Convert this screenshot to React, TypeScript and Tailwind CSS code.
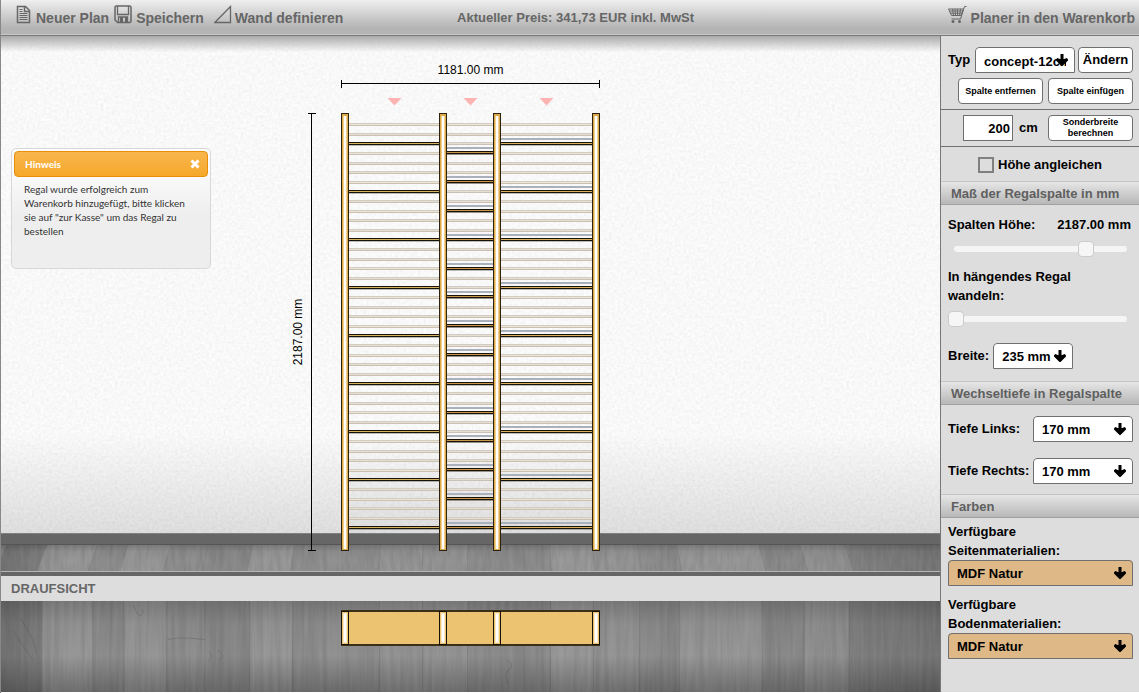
import { useState, type ReactNode } from "react";
import clsx from "clsx";

interface SelectFieldProps {
  id: string;
  options: string[];
  className?: string;
}

interface SectionTitleProps {
  children: ReactNode;
}

const FONT = "font-['Liberation_Sans',Arial,sans-serif]";

// Slot and board positions of the shelf, in drawing units
const SLOTS = Array.from({ length: 43 }, (_, i) => Math.round(124.1 + i * 9.6));
const WIDE_BOARDS = Array.from({ length: 9 }, (_, i) => 143 + i * 48);
const NARROW_BOARDS = Array.from({ length: 14 }, (_, i) => Math.round(152.4 + i * 28.8));
const POSTS = [341, 439, 493, 592];
const COLUMNS = [
  { x: 349, width: 90, boards: WIDE_BOARDS, rail: false },
  { x: 447, width: 46, boards: NARROW_BOARDS, rail: true },
  { x: 501, width: 91, boards: WIDE_BOARDS, rail: true },
];

const PLANKS = [
  { x: 0, width: 41, fill: "#000", opacity: 0.1 },
  { x: 41, width: 51, fill: "#fff", opacity: 0.03 },
  { x: 92, width: 31, fill: "#000", opacity: 0.03 },
  { x: 123, width: 43, fill: "#fff", opacity: 0.05 },
  { x: 166, width: 38, fill: "#000", opacity: 0.03 },
  { x: 204, width: 45, fill: "#000", opacity: 0.05 },
  { x: 249, width: 43, fill: "#fff", opacity: 0.04 },
  { x: 292, width: 87, fill: "#000", opacity: 0.02 },
  { x: 379, width: 43, fill: "#fff", opacity: 0.03 },
  { x: 422, width: 45, fill: "#fff", opacity: 0.01 },
  { x: 467, width: 83, fill: "#000", opacity: 0.04 },
  { x: 550, width: 43, fill: "#fff", opacity: 0.06 },
  { x: 593, width: 46, fill: "#fff", opacity: 0.02 },
  { x: 639, width: 40, fill: "#000", opacity: 0.04 },
  { x: 679, width: 83, fill: "#fff", opacity: 0.04 },
  { x: 762, width: 42, fill: "#000", opacity: 0.05 },
  { x: 804, width: 45, fill: "#fff", opacity: 0.03 },
  { x: 849, width: 91, fill: "#000", opacity: 0.05 },
];

function SectionTitle({ children }: SectionTitleProps) {
  return (
    <h2 className="h-6 pl-[10px] text-[13px] leading-6 font-bold text-[#5f5f5f] whitespace-nowrap border-y border-t-[#c4c4c4] border-b-[#a2a2a2] bg-linear-to-b from-[#e6e6e6] to-[#b8b8b8]">
      {children}
    </h2>
  );
}

function ArrowDown() {
  return (
    <svg
      viewBox="0 0 12 12"
      className="absolute right-[7px] top-[7px] size-3 pointer-events-none"
      aria-hidden="true"
    >
      <path d="M4.5 0h3v5.2L10.8 4 12 5.4v1L6.5 12h-1L0 6.4v-1L1.2 4l3.3 1.2z" fill="#000" />
    </svg>
  );
}

function SelectField({ id, options, className }: SelectFieldProps) {
  return (
    <span className={clsx("relative block h-[26px] rounded-t-[4px]", className)}>
      <select
        id={id}
        className="block size-full appearance-none rounded-t-[4px] border border-[#707070] bg-inherit pl-2 pr-2 pt-[3px] text-[13px] font-bold text-black"
      >
        {options.map((option) => (
          <option key={option}>{option}</option>
        ))}
      </select>
      <ArrowDown />
    </span>
  );
}

function Slider({ label, initial, max }: { label: string; initial: number; max: number }) {
  const [value, setValue] = useState(initial);

  return (
    <input
      type="range"
      aria-label={label}
      min={0}
      max={max}
      value={value}
      onChange={(e) => setValue(Number(e.target.value))}
      className="block h-4 w-full appearance-none bg-transparent [&::-webkit-slider-runnable-track]:h-[6px] [&::-webkit-slider-runnable-track]:rounded-full [&::-webkit-slider-runnable-track]:bg-[#f5f5f5] [&::-webkit-slider-thumb]:appearance-none [&::-webkit-slider-thumb]:size-4 [&::-webkit-slider-thumb]:-mt-[5px] [&::-webkit-slider-thumb]:rounded-[4px] [&::-webkit-slider-thumb]:border [&::-webkit-slider-thumb]:border-[#cccccc] [&::-webkit-slider-thumb]:bg-[#f6f6f6]"
    />
  );
}

function WallTexture() {
  return (
    <svg className="absolute inset-0 size-full opacity-5" aria-hidden="true">
      <filter id="plaster" x="0" y="0" width="100%" height="100%">
        <feTurbulence type="fractalNoise" baseFrequency="0.35" numOctaves="3" seed="4" />
        <feColorMatrix values="0 0 0 0 0  0 0 0 0 0  0 0 0 0 0  1 1 0 0 -0.7" />
      </filter>
      <rect width="100%" height="100%" filter="url(#plaster)" />
    </svg>
  );
}

function WoodFloor({ id, slanted = false }: { id: string; slanted?: boolean }) {
  const slope = slanted ? 0.012 : 0;

  return (
    <svg
      viewBox="0 0 940 92"
      preserveAspectRatio="none"
      className="absolute inset-0 size-full"
      aria-hidden="true"
    >
      <defs>
        <linearGradient id={`${id}-shade`} x1="0" y1="0" x2="0" y2="1">
          <stop offset="0" stopColor="#000" stopOpacity="0.18" />
          <stop offset="0.25" stopColor="#000" stopOpacity="0.04" />
          <stop offset="0.6" stopColor="#000" stopOpacity="0" />
          <stop offset="1" stopColor="#000" stopOpacity={slanted ? 0 : 0.25} />
        </linearGradient>
        <linearGradient id={`${id}-sides`}>
          <stop offset="0" stopColor="#000" stopOpacity="0.12" />
          <stop offset="0.06" stopColor="#000" stopOpacity="0" />
          <stop offset="0.85" stopColor="#000" stopOpacity="0" />
          <stop offset="1" stopColor="#000" stopOpacity="0.15" />
        </linearGradient>
        <filter id={`${id}-grain`} x="0" y="0" width="100%" height="100%">
          <feTurbulence type="fractalNoise" baseFrequency="0.22 0.012" numOctaves="3" seed="9" />
          <feColorMatrix values="0 0 0 0 0  0 0 0 0 0  0 0 0 0 0  1 0 0 0 -0.3" />
        </filter>
      </defs>
      <rect width="940" height="92" fill="#949494" />
      {PLANKS.map((p) => {
        const start = (470 - p.x) * slope;
        const end = (470 - p.x - p.width) * slope;
        return (
          <g key={p.x}>
            <path
              d={`M${p.x + start} 0H${p.x + p.width + end}L${p.x + p.width - end} 92H${p.x - start}z`}
              fill={p.fill}
              opacity={p.opacity}
            />
            <path d={`M${p.x + start} 0L${p.x - start} 92`} stroke="#7c7c7c" opacity="0.6" />
          </g>
        );
      })}
      <rect width="940" height="92" filter={`url(#${id}-grain)`} opacity="0.16" />
      {!slanted && (
        <g fill="none" stroke="#666" opacity="0.5">
          <path d="M167 39c12-3 26-1 37 0M217 50c5 2 6 8 1 10M208 51c4 3 3 7 0 9M20 18l12 21 4 15M12 30l20 30" />
          <path d="M507 60c5 2 5 8 1 10s-3 8 0 14M133 4c2 10 9 16 9 4" />
        </g>
      )}
      <rect width="940" height="92" fill={`url(#${id}-shade)`} />
      <rect width="940" height="92" fill={`url(#${id}-sides)`} />
    </svg>
  );
}

function ShelfFront() {
  return (
    <svg
      width="360"
      height="492"
      viewBox="291 60 360 492"
      className="relative block"
      role="img"
      aria-label="Vorderansicht"
    >
      <text x="470.5" y="74" textAnchor="middle" fontSize="12">
        1181.00 mm
      </text>
      <text transform="translate(302 332) rotate(-90)" textAnchor="middle" fontSize="12">
        2187.00 mm
      </text>
      <path
        d="M341.5 80v8M341 83.5h259M599.5 80v8M308 113.5h8M311.5 113v438M308 550.5h8"
        stroke="#000"
        fill="none"
        shapeRendering="crispEdges"
      />
      <path d="M387.500 98h14l-7 7.500zM463.500 98h14l-7 7.500zM539.500 98h14l-7 7.500z" fill="#ffb3b3" />

      <g shapeRendering="crispEdges">
        {SLOTS.map((y, i) => (
          <g key={y}>
            <rect x="349" y={y - 1} width="243" height="3" fill={i % 3 ? "#e8decd" : "#f1e6cd"} />
            <rect x="349" y={y - 1} width="243" height="1" fill="#d0cdc8" />
            <rect x="349" y={y + 1} width="243" height="1" fill="#c8c1b5" />
          </g>
        ))}

        {COLUMNS.map((column) =>
          column.boards.map((y) => (
            <g key={`${column.x}-${y}`}>
              {column.rail && <rect x={column.x} y={y - 5} width={column.width} height="2" fill="#abb0bd" />}
              <rect x={column.x} y={y - 1} width={column.width} height="3" fill="#17120a" />
              <rect
                x={column.x}
                y={y}
                width={column.width}
                height="1"
                fill={column.width < 50 ? "#c8974a" : "#d9b15c"}
              />
              <rect x={column.x} y={y + 2} width={column.width} height="1" fill="#000" opacity="0.25" />
            </g>
          )),
        )}

        {POSTS.map((x) => (
          <g key={x}>
            <rect x={x} y="113" width="8" height="438" fill="#2b2210" />
            <rect x={x + 1} y="114" width="6" height="436" fill="#dca94c" />
            <rect x={x + 2} y="116" width="4" height="433" fill="#f0d190" />
            <rect x={x + 3} y="116" width="2" height="433" fill="#fff" />
          </g>
        ))}
      </g>
    </svg>
  );
}

function ShelfTop() {
  return (
    <svg
      width="260"
      height="36"
      viewBox="341 610 260 36"
      shapeRendering="crispEdges"
      className="relative block"
      role="img"
      aria-label="Draufsicht"
    >
      <rect x="341" y="610" width="259" height="36" fill="#3c2f17" />
      <rect x="342" y="612" width="257" height="32" fill="#ecc370" />
      {POSTS.map((x) => (
        <g key={x}>
          <rect x={x} y="611" width="8" height="34" fill="#17120a" />
          <rect x={x + 1} y="612" width="6" height="32" fill="#ecc370" />
          <rect x={x + 2} y="613" width="4" height="30" fill="#f8e8c8" />
          <rect x={x + 3} y="614" width="2" height="28" fill="#fff" />
        </g>
      ))}
    </svg>
  );
}

function Notice() {
  return (
    <section className="absolute left-[10px] top-[112px] w-[200px] h-[121px] rounded-[5px] border border-[#d8d8d8] bg-linear-to-b from-[#fbfbfb] from-20% to-[#eeeeee] to-55% p-[2px] font-[Lato,sans-serif] text-[#333333]">
      <header className="flex h-[26px] items-center justify-between rounded-[4px] border border-[#e78f08] bg-linear-to-b from-[#f8b64c] to-[#f6a828] pl-[10px] pr-[7px]">
        <h2 className="text-[10px] font-bold text-white">Hinweis</h2>
        <button type="button" aria-label="Schließen" className="text-white">
          <svg viewBox="0 0 10 10" className="size-[10px]">
            <path d="M1.500 1.500l7 7M8.500 1.500l-7 7" stroke="currentColor" strokeWidth="3" />
          </svg>
        </button>
      </header>
      <p className="pl-[10px] pt-[5px] text-[10px] leading-[14px]">
        Regal wurde erfolgreich zum
        <br />
        Warenkorb hinzugefügt, bitte klicken
        <br />
        sie auf "zur Kasse" um das Regal zu
        <br />
        bestellen
      </p>
    </section>
  );
}

function Toolbar() {
  return (
    <header className="flex h-9 items-start justify-between border-b border-[#777777] bg-linear-to-b from-[#efefef] to-[#b4b4b4] to-80% text-[14px] leading-5 font-bold text-[#666666] shadow-[inset_0_-1px_0_#c9c9c9]">
      <nav className="flex flex-1 items-start gap-[5px] pl-[15px] pt-[5px]">
        <button type="button" className="flex gap-1">
          <svg viewBox="0 0 16 20" className="w-4 h-5" fill="none" stroke="currentColor">
            <path d="M1.500 1.500h8l4 4v12h-12z" strokeWidth="1.500" />
            <path d="M8.500 1.500v5h5" strokeWidth="1.500" />
            <path d="M3.500 4.500h3M3.500 6.500h3M3.500 8.500h8M3.500 10.500h8M3.500 12.500h8M3.500 14.500h8" />
          </svg>
          <span className="pt-[3px]">Neuer Plan</span>
        </button>
        <button type="button" className="flex gap-1">
          <svg viewBox="0 0 18 20" className="w-[18px] h-5" fill="none" stroke="currentColor">
            <path
              d="M1 2a1.500 1.500 0 0 1 1.500-1h13A1.500 1.500 0 0 1 17 2.500v13.500a1.500 1.500 0 0 1-1.500 1.500h-12L1 15z"
              strokeWidth="1.500"
            />
            <path d="M3.500 1v8.500h11V1M4.500 17v-5h9v5" strokeWidth="1.300" />
            <path d="M6 12h3v5H6zM11 12h2.500v5H11z" fill="currentColor" stroke="none" />
          </svg>
          <span className="pt-[3px]">Speichern</span>
        </button>
        <button type="button" className="ml-[5px] flex gap-[3px]">
          <svg viewBox="0 0 18 20" className="w-[18px] h-5" fill="none" stroke="currentColor">
            <path d="M.8 17.500L16.500 1.500v16z" strokeWidth="1.300" />
          </svg>
          <span className="pt-[3px]">Wand definieren</span>
        </button>
      </nav>
      <p className="pt-2 text-[13px]">Aktueller Preis: 341,73 EUR inkl. MwSt</p>
      <div className="flex flex-1 justify-end pr-1 pt-[5px]">
        <button type="button" className="flex gap-1">
          <svg viewBox="0 0 19 20" className="w-[19px] h-5" fill="none" stroke="currentColor">
            <path d="M.5 4h15L13 10.500H3.500zM18.500 1.500h-2L12.500 14h-9M1.500 6h13.500M2 8.200h12M4.500 4l1 6.500M7 4l.6 6.500M9.500 4v6.500M12.500 4l-1 6.500" />
            <circle cx="5" cy="16.500" r="1.500" fill="currentColor" stroke="none" />
            <circle cx="11.500" cy="16.500" r="1.500" fill="currentColor" stroke="none" />
          </svg>
          <span className="pt-[3px]">Planer in den Warenkorb</span>
        </button>
      </div>
    </header>
  );
}

function Sidebar() {
  const smallButton =
    "h-[26px] w-[85px] rounded-[4px] border border-[#707070] bg-white text-[9px] leading-[11px] font-bold whitespace-nowrap";

  return (
    <aside className="w-[199px] shrink-0 border-l border-[#777777] bg-[#dddddd] text-[13px] font-bold text-black">
      <div className="flex flex-col gap-[5px] border-b border-[#707070] pt-[11px] pb-[5px] pr-[6px]">
        <div className="flex items-center justify-between pl-[7px]">
          <label htmlFor="type">Typ</label>
          <div className="flex gap-[3px]">
            <SelectField id="type" options={["concept-12cm"]} className="w-[100px] bg-white" />
            <button type="button" className="w-[55px] rounded-[4px] border border-[#707070] bg-white">
              Ändern
            </button>
          </div>
        </div>
        <div className="flex justify-end gap-[5px]">
          <button type="button" className={smallButton}>
            Spalte entfernen
          </button>
          <button type="button" className={smallButton}>
            Spalte einfügen
          </button>
        </div>
      </div>

      <div className="flex items-center justify-end border-b border-[#707070] py-[5px] pr-[6px]">
        <input
          id="width"
          type="text"
          defaultValue="200"
          className="h-[26px] w-[50px] border border-[#707070] bg-white pr-[2px] text-right"
        />
        <label htmlFor="width" className="w-[35px] pl-[6px]">
          cm
        </label>
        <button type="button" className={smallButton}>
          Sonderbreite
          <br />
          berechnen
        </button>
      </div>

      <label className="flex h-[34px] items-center gap-1 pl-[37px] pt-px">
        <input
          type="checkbox"
          className="size-4 appearance-none border-2 border-[#808080] bg-[#dddddd] checked:bg-[#707070]"
        />
        Höhe angleichen
      </label>

      <SectionTitle>Maß der Regalspalte in mm</SectionTitle>
      <div className="pl-[7px] pr-2 pt-[10px] pb-3">
        <div className="flex justify-between">
          <span>Spalten Höhe:</span>
          <output>2187.00 mm</output>
        </div>
        <div className="pl-[6px] pr-1 pt-[6px]">
          <Slider label="Spalten Höhe" initial={79} max={100} />
        </div>
        <p className="w-36 pt-[10px] leading-[19px]">In hängendes Regal wandeln:</p>
        <div className="pr-1 pt-[6px]">
          <Slider label="In hängendes Regal wandeln" initial={0} max={1} />
        </div>
        <div className="flex items-center gap-1 pt-4">
          <label htmlFor="breadth">Breite:</label>
          <SelectField id="breadth" options={["235 mm", "335 mm"]} className="w-[80px] bg-white" />
        </div>
      </div>

      <SectionTitle>Wechseltiefe in Regalspalte</SectionTitle>
      <div className="flex flex-col gap-4 pl-[7px] pr-[6px] pt-[11px] pb-[10px]">
        <div className="flex items-center justify-between">
          <label htmlFor="depth-left">Tiefe Links:</label>
          <SelectField id="depth-left" options={["170 mm", "235 mm"]} className="w-[100px] bg-white" />
        </div>
        <div className="flex items-center justify-between">
          <label htmlFor="depth-right">Tiefe Rechts:</label>
          <SelectField id="depth-right" options={["170 mm", "235 mm"]} className="w-[100px] bg-white" />
        </div>
      </div>

      <SectionTitle>Farben</SectionTitle>
      <div className="flex flex-col gap-[9px] pl-[7px] pr-[6px] pt-1">
        <div>
          <label htmlFor="side-material" className="block w-32 leading-[19px]">
            Verfügbare Seitenmaterialien:
          </label>
          <SelectField id="side-material" options={["MDF Natur"]} className="bg-[#deb887]" />
        </div>
        <div>
          <label htmlFor="board-material" className="block w-32 leading-[19px]">
            Verfügbare Bodenmaterialien:
          </label>
          <SelectField id="board-material" options={["MDF Natur"]} className="bg-[#deb887]" />
        </div>
      </div>
    </aside>
  );
}

export default function App() {
  return (
    <div className={clsx("flex min-h-screen flex-col border-l border-[#888888] pb-px", FONT)}>
      <Toolbar />
      <div className="flex flex-1">
        <main className="flex min-w-0 flex-1 flex-col">
          <div className="relative flex justify-center pt-6 pb-5">
            <div className="absolute inset-0 flex flex-col">
              <div className="relative flex-1 bg-linear-to-b from-[#fcfcfc] from-80% to-[#e0e0e0]">
                <WallTexture />
                <div className="relative h-4 bg-linear-to-b from-[#aaaaaa] to-transparent" />
              </div>
              <div className="h-3 border-y border-t-[#808080] border-b-[#555555] bg-[#666666]" />
              <div className="relative h-[27px] border-b border-[#b5b5b5]">
                <WoodFloor id="front" slanted />
              </div>
            </div>
            <ShelfFront />
            <Notice />
          </div>
          <h2 className="h-[29px] border-t-4 border-[#666666] bg-[#dddddd] pl-[10px] text-[13px] leading-[25px] font-bold text-[#666666]">
            DRAUFSICHT
          </h2>
          <div className="relative flex flex-1 justify-center pt-[9px]">
            <WoodFloor id="top" />
            <ShelfTop />
          </div>
        </main>
        <Sidebar />
      </div>
    </div>
  );
}
